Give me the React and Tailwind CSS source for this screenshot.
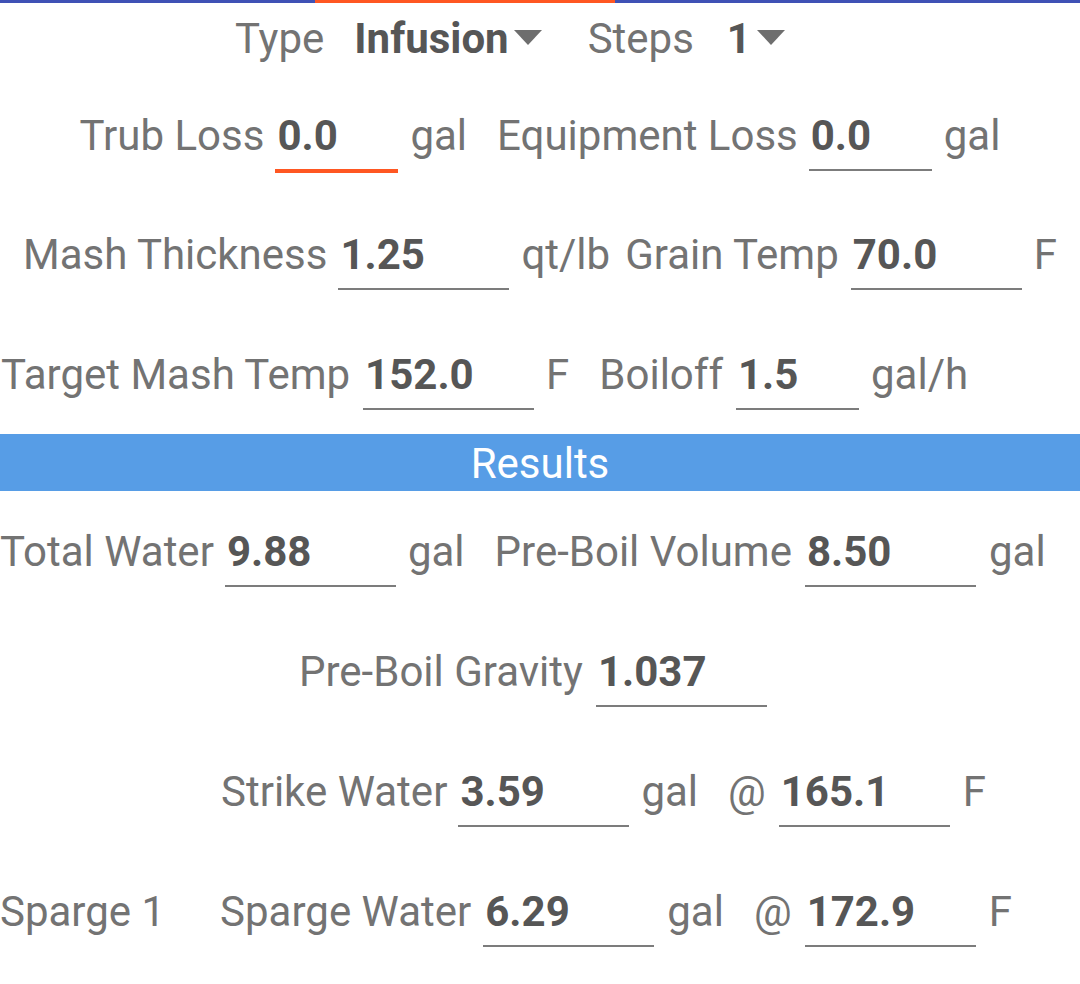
import React from "react";

const Label = ({ children, className = "" }) => (
  <span className={"text-[#737373] whitespace-pre " + className}>{children}</span>
);

const Field = ({ value, w, focused = false, className = "" }) => (
  <div
    className={
      "font-bold text-[#565656] pl-[2px] pb-[8px] " +
      (focused ? "border-b-4 border-[#ff5722] " : "border-b-2 border-[#7c7c7c] ") +
      className
    }
    style={{ width: w }}
  >
    {value}
  </div>
);

const Tri = ({ className = "" }) => (
  <svg
    viewBox="0 0 28 16"
    className={"w-[28px] h-[16px] self-start mt-[15px] " + className}
    fill="#6e6e6e"
  >
    <path d="M0 1 L28 1 L14 16 Z" />
  </svg>
);

export default function App() {
  return (
    <div className="w-[1080px] h-[984px] bg-white overflow-hidden font-[Roboto,sans-serif] text-[42px] leading-[50px]">
      <div className="flex h-[3px]">
        <div className="w-[315px] bg-[#3f51b5]" />
        <div className="w-[300px] bg-[#ff5722]" />
        <div className="flex-1 bg-[#3f51b5]" />
      </div>

      {/* Row 1 */}
      <div className="mt-[11px] flex items-baseline pl-[235px]">
        <Label>Type</Label>
        <span className="ml-[30px] font-bold text-[#565656]">Infusion</span>
        <Tri className="ml-[5px]" />
        <Label className="ml-[46px]">Steps</Label>
        <span className="ml-[33px] font-bold text-[#565656]">1</span>
        <Tri className="ml-[6px]" />
      </div>

      {/* Row 2 */}
      <div className="mt-[47px] h-[60px] flex justify-center items-baseline">
        <Label>Trub Loss</Label>
        <Field value="0.0" w={123} focused className="ml-[11px]" />
        <Label className="ml-[12px]">gal</Label>
        <Label className="ml-[30px]">Equipment Loss</Label>
        <Field value="0.0" w={123} className="ml-[11px]" />
        <Label className="ml-[12px]">gal</Label>
      </div>

      {/* Row 3 */}
      <div className="mt-[59px] h-[60px] flex justify-center items-baseline">
        <Label>Mash Thickness</Label>
        <Field value="1.25" w={171} className="ml-[11px]" />
        <Label className="ml-[12px]">qt/lb</Label>
        <Label className="ml-[15px]">Grain Temp</Label>
        <Field value="70.0" w={171} className="ml-[12px]" />
        <Label className="ml-[12px]">F</Label>
      </div>

      {/* Row 4 */}
      <div className="mt-[60px] h-[60px] flex items-baseline pl-[1px]">
        <Label>Target Mash Temp</Label>
        <Field value="152.0" w={171} className="ml-[13px]" />
        <Label className="ml-[12px]">F</Label>
        <Label className="ml-[30px]">Boiloff</Label>
        <Field value="1.5" w={123} className="ml-[13px]" />
        <Label className="ml-[12px]">gal/h</Label>
      </div>

      {/* Results */}
      <div className="mt-[24px] h-[57px] bg-[#579de6] text-white text-center leading-[60px]">
        Results
      </div>

      {/* Row 5 */}
      <div className="mt-[36px] h-[60px] flex items-baseline">
        <Label>Total Water</Label>
        <Field value="9.88" w={171} className="ml-[11px]" />
        <Label className="ml-[12px]">gal</Label>
        <Label className="ml-[30px]">Pre-Boil Volume</Label>
        <Field value="8.50" w={171} className="ml-[13px]" />
        <Label className="ml-[13px]">gal</Label>
      </div>

      {/* Row 6 */}
      <div className="mt-[60px] h-[60px] flex items-baseline pl-[299px]">
        <Label>Pre-Boil Gravity</Label>
        <Field value="1.037" w={171} className="ml-[13px]" />
      </div>

      {/* Row 7 */}
      <div className="mt-[60px] h-[60px] flex items-baseline pl-[221px]">
        <Label>Strike Water</Label>
        <Field value="3.59" w={171} className="ml-[11px]" />
        <Label className="ml-[12px]">gal</Label>
        <Label className="ml-[30px]">@</Label>
        <Field value="165.1" w={171} className="ml-[13px]" />
        <Label className="ml-[13px]">F</Label>
      </div>

      {/* Row 8 */}
      <div className="mt-[60px] h-[60px] flex items-baseline">
        <Label>Sparge 1</Label>
        <Label className="ml-[55px]">Sparge Water</Label>
        <Field value="6.29" w={171} className="ml-[12px]" />
        <Label className="ml-[13px]">gal</Label>
        <Label className="ml-[30px]">@</Label>
        <Field value="172.9" w={171} className="ml-[13px]" />
        <Label className="ml-[13px]">F</Label>
      </div>
    </div>
  );
}
